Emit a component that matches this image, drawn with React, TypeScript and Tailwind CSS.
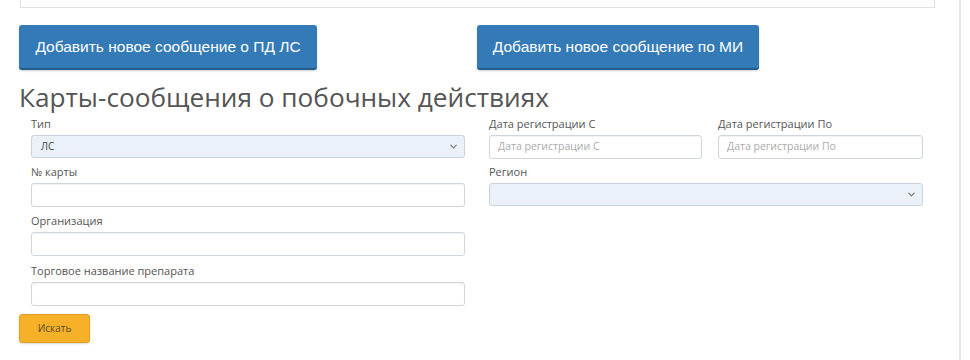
import { ChevronDown } from 'lucide-react'

function Label({ children }: { children: React.ReactNode }) {
  return <div className="text-[11px] leading-[13px] text-[#555] mb-[5px]">{children}</div>
}

function Input({ placeholder }: { placeholder?: string }) {
  return (
    <div className="h-[24px] border border-[#cfd6de] rounded-[3px] bg-white flex items-center px-[8px] text-[10.5px] text-[#aaa] shadow-[inset_0_1px_1px_rgba(0,0,0,0.05)]">
      {placeholder}
    </div>
  )
}

function Select({ value }: { value?: string }) {
  return (
    <div className="h-[23px] border border-[#c9d3de] rounded-[3px] bg-[#eaf1f8] flex items-center justify-between pl-[9px] pr-[5px] text-[10px] text-[#444]">
      <span>{value}</span>
      <ChevronDown className="h-[11px] w-[11px] text-[#777]" strokeWidth={2.5} />
    </div>
  )
}

export default function App() {
  return (
    <div className="w-[970px] h-[360px] bg-white overflow-hidden flex" style={{ fontFamily: '"Liberation Sans", Arial, sans-serif' }}>
      <div className="w-[961px] shrink-0 border-r-2 border-[#e6e6e6] pl-[19px] pr-[24px]">
        <div className="h-[8px] ml-[1px] border border-t-0 border-[#e0e0e0]" />

        <div className="flex mt-[17px]">
          <button className="w-[298px] h-[45px] bg-[#337ab7] border-b-2 border-[#225d8f] rounded-[3px] text-white text-[15.5px] shadow-[0_1px_2px_rgba(0,0,0,0.2)]">
            Добавить новое сообщение о ПД ЛС
          </button>
          <button className="ml-[160px] w-[282px] h-[45px] bg-[#337ab7] border-b-2 border-[#225d8f] rounded-[3px] text-white text-[15.5px] shadow-[0_1px_2px_rgba(0,0,0,0.2)]">
            Добавить новое сообщение по МИ
          </button>
        </div>

        <h1 className="mt-[12px] text-[26.2px] leading-[30px] text-[#555]" style={{ fontFamily: '"Open Sans", Arial, sans-serif' }}>
          Карты-сообщения о побочных действиях
        </h1>

        <div className="flex mt-[5px]" style={{ fontFamily: '"Open Sans", Arial, sans-serif' }}>
          <div className="w-[458px] px-[12px] flex flex-col">
            <Label>Тип</Label>
            <Select value="ЛС" />
            <div className="mt-[7px]"><Label>№ карты</Label></div>
            <Input />
            <div className="mt-[7px]"><Label>Организация</Label></div>
            <Input />
            <div className="mt-[8px]"><Label>Торговое название препарата</Label></div>
            <Input />
          </div>
          <div className="w-[458px] px-[12px] flex flex-col">
            <div className="flex gap-[16px]">
              <div className="w-[213px]">
                <Label>Дата регистрации С</Label>
                <Input placeholder="Дата регистрации С" />
              </div>
              <div className="flex-1">
                <Label>Дата регистрации По</Label>
                <Input placeholder="Дата регистрации По" />
              </div>
            </div>
            <div className="mt-[6px]"><Label>Регион</Label></div>
            <Select />
          </div>
        </div>

        <button className="mt-[8px] w-[71px] h-[29px] bg-[#f6b128] border border-[#e3a01c] rounded-[3px] text-[10px] text-[#5a4a2a] shadow-[0_1px_2px_rgba(0,0,0,0.15)]" style={{ fontFamily: '"Open Sans", Arial, sans-serif' }}>
          Искать
        </button>
      </div>
    </div>
  )
}
